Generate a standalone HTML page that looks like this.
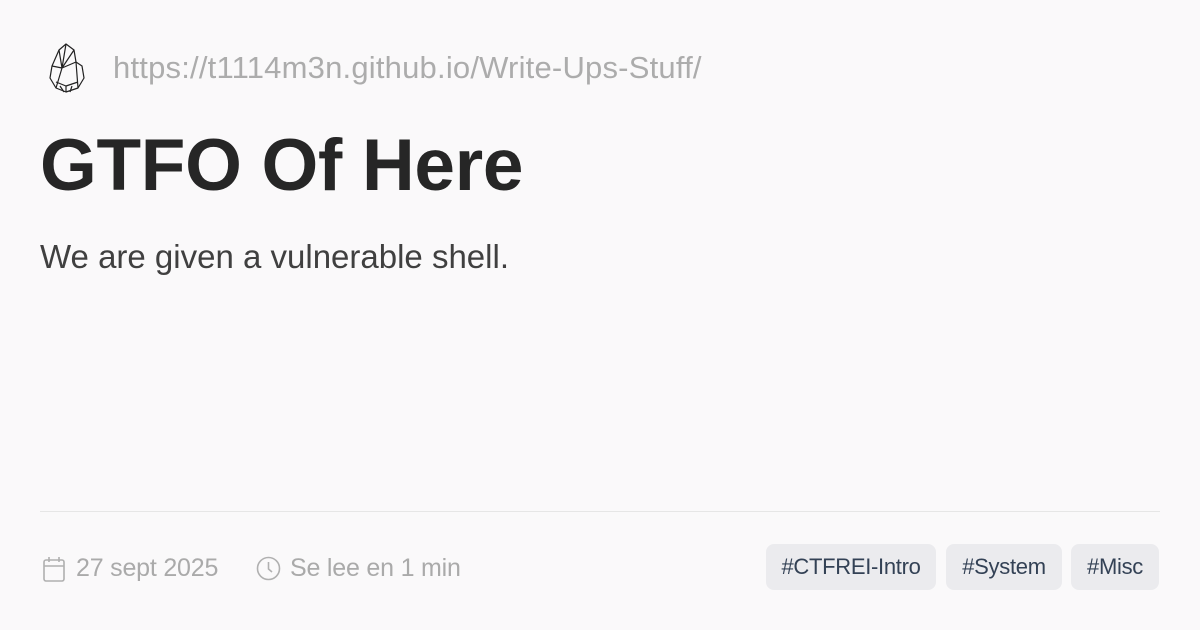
<!DOCTYPE html>
<html><head><meta charset="utf-8"><style>
*{margin:0;padding:0;box-sizing:border-box}
body{width:1200px;height:630px;background:#faf9fa;font-family:"Liberation Sans",sans-serif;position:relative;overflow:hidden}
.url{position:absolute;left:113px;top:50px;font-size:31px;color:#acacac;white-space:nowrap;letter-spacing:0.2px}
h1{position:absolute;left:40px;top:124px;font-size:73px;font-weight:bold;color:#262626;letter-spacing:-0.3px;white-space:nowrap}
.sub{position:absolute;left:40px;top:238px;font-size:33px;color:#404040;white-space:nowrap}
.hr{position:absolute;left:40px;right:40px;top:511px;height:1px;background:#e6e6e6}
.meta{position:absolute;top:554px;font-size:25px;color:#aaaaaa;white-space:nowrap;letter-spacing:-0.2px}
.tag{position:absolute;top:544px;height:46px;background:#ebebee;border-radius:8px;color:#334155;font-size:22px;line-height:46px;text-align:center;letter-spacing:-0.3px}
</style></head><body>
<svg style="position:absolute;left:46px;top:42px" width="42" height="52" viewBox="0 0 42 52" fill="none" stroke="#222" stroke-width="1.2" stroke-linejoin="round">
<path d="M13 8 L20 2 L28 8 L30 20 L36 24 L38 36 L32 46 L20 50 L10 46 L4 36 L6 24 Z"/>
<path d="M13 8 L16 26 L20 2 M16 26 L28 8 M16 26 L10 46 M16 26 L30 20 M30 20 L32 46 M6 24 L16 26 M10 40 L20 44 L32 40 M20 44 L20 50 M14 44 L18 50 M26 44 L24 50"/>
</svg>
<div class="url">https://t1114m3n.github.io/Write-Ups-Stuff/</div>
<h1>GTFO Of Here</h1>
<div class="sub">We are given a vulnerable shell.</div>
<div class="hr"></div>
<svg style="position:absolute;left:43px;top:556px" width="22" height="26" viewBox="0 0 22 26" fill="none" stroke="#b0b0b0" stroke-width="1.6"><rect x="1" y="4" width="20" height="21" rx="2"/><path d="M1 10 H21 M6 1 V6 M16 1 V6"/></svg>
<div class="meta" style="left:76px">27 sept 2025</div>
<svg style="position:absolute;left:256px;top:556px" width="25" height="25" viewBox="0 0 25 25" fill="none" stroke="#b0b0b0" stroke-width="1.6"><circle cx="12.5" cy="12.5" r="11"/><path d="M12.5 6 V13 L16 16"/></svg>
<div class="meta" style="left:290px">Se lee en 1 min</div>
<div class="tag" style="left:766px;width:170px">#CTFREI-Intro</div>
<div class="tag" style="left:946px;width:116px">#System</div>
<div class="tag" style="left:1071px;width:88px">#Misc</div>
</body></html>
